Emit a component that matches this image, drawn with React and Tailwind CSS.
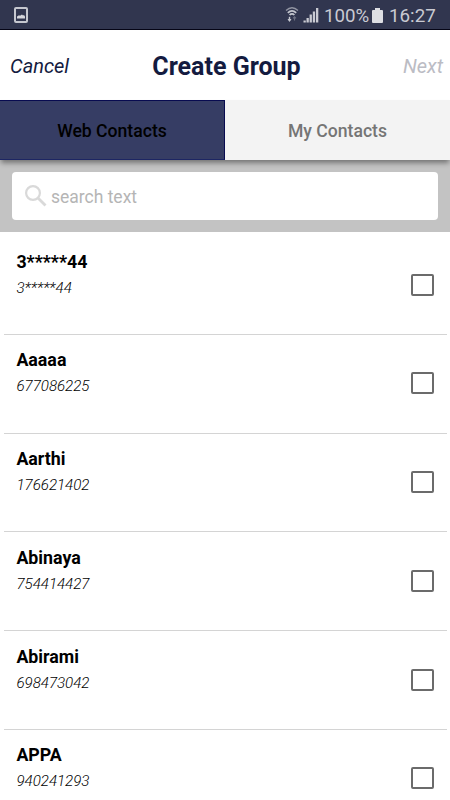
import React, { useState } from 'react';

const contacts = [
  { name: '3*****44', phone: '3*****44' },
  { name: 'Aaaaa', phone: '677086225' },
  { name: 'Aarthi', phone: '176621402' },
  { name: 'Abinaya', phone: '754414427' },
  { name: 'Abirami', phone: '698473042' },
  { name: 'APPA', phone: '940241293' },
];

// Android status bar
const StatusBar = () => (
  <div className="flex h-[30px] shrink-0 items-center border-b border-[#050516] bg-[#31364f] pl-[14px] pr-[14px] text-[#c9cad2]">
    <svg className="mt-px h-[16px] w-[14px]" viewBox="0 0 14 16" fill="none">
      <rect x="1" y="1" width="12" height="14" rx="1" stroke="#c5c7cf" strokeWidth="2" />
      <path d="M3 11.5V9.5L5 8.3L6 8.8L8 7.5L9 8.5L10 8L11 9.5V11.5Z" fill="#d5d6dc" />
    </svg>
    <svg className="ml-auto h-[17px] w-[14px]" viewBox="0 0 14 17" fill="none" stroke="#c5c7cf">
      <path d="M1 4.5Q7 -1 13 4.5" strokeWidth="1.3" opacity="0.65" />
      <path d="M2.8 6.8Q7 2.8 11.2 6.8" strokeWidth="1.6" />
      <path d="M4.6 9Q7 6.6 9.4 9" strokeWidth="1.7" />
      <path d="M4.5 10.8V15" strokeWidth="1.4" />
      <path d="M2.5 13H6.5L4.5 16Z" fill="#c5c7cf" stroke="none" />
      <path d="M9.5 14.5V11M8 12.3L9.5 10.8L11 12.3" strokeWidth="1.1" opacity="0.4" />
    </svg>
    <svg className="ml-[4px] h-[16px] w-[16px]" viewBox="0 0 16 16" fill="#c9cad2">
      <rect x="0.5" y="13.5" width="2.3" height="2" />
      <rect x="3.5" y="11" width="2.3" height="4.5" />
      <rect x="6.6" y="7.5" width="2.3" height="8" />
      <rect x="9.8" y="4.5" width="2.3" height="11" />
      <rect x="13" y="1" width="2.3" height="14.5" />
    </svg>
    <span className="ml-[5px] w-[46px] whitespace-nowrap pt-[2px] text-[18.7px] leading-[28px]">100%</span>
    <svg className="ml-[2px] mt-px h-[17px] w-[11px]" viewBox="0 0 11 17" fill="#dddee3">
      <path d="M3 1H8V3H10Q11 3 11 4V15Q11 16 10 16H1Q0 16 0 15V4Q0 3 1 3H3Z" />
    </svg>
    <span className="ml-[6px] w-[47px] whitespace-nowrap pt-[2px] text-[18.8px] leading-[28px]">16:27</span>
  </div>
);

const ContactRow = ({ contact, checked, onToggle }) => (
  <li className="ml-1 mr-[3px] flex h-[98.75px] shrink-0 justify-between border-b border-[#d4d4d4] pl-[12.4px] pr-[13px]">
    <div className="pt-[12.6px]">
      <p className="text-[17.8px] font-bold leading-[26px] text-black">{contact.name}</p>
      <p className="text-[15.1px] font-light italic leading-[26px] text-black">{contact.phone}</p>
    </div>
    <button
      type="button"
      role="checkbox"
      aria-checked={checked}
      aria-label={contact.name}
      onClick={onToggle}
      className={`mt-[37.5px] h-[22px] w-[23px] rounded-[2px] border-2 border-[#6b6b6b] ${checked ? 'bg-[#363d64]' : 'bg-white'}`}
    />
  </li>
);

const App = () => {
  const [activeTab, setActiveTab] = useState('web');
  const [search, setSearch] = useState('');
  const [selected, setSelected] = useState([]);

  const toggle = (name) => {
    setSelected((prev) => (prev.includes(name) ? prev.filter((n) => n !== name) : [...prev, name]));
  };

  const tabClass = (tab) =>
    activeTab === tab
      ? 'border border-l-0 border-[#080b50] border-b-[#1d2663] bg-[#363d64] pt-[2px] text-black'
      : 'bg-[#f3f3f3] pt-[2px] text-[#757575]';

  const visible = contacts.filter((c) => c.name.toLowerCase().includes(search.toLowerCase()));

  return (
    <div className="flex h-[800px] w-[450px] flex-col overflow-hidden bg-white font-['Roboto',sans-serif]">
      <StatusBar />

      {/* Header */}
      <header className="grid h-[70px] shrink-0 grid-cols-[1fr_auto_1fr] items-center pl-[10px] pr-[7px] pt-[2px] text-[#141b40]">
        <button type="button" className="text-left text-[20px] italic">Cancel</button>
        <h1 className="pt-[2px] text-[25px] font-bold">Create Group</h1>
        <button type="button" className="text-right text-[20px] italic text-[#bbbcc4]">Next</button>
      </header>

      {/* Tabs */}
      <div className="z-10 grid h-[60px] shrink-0 grid-cols-2 text-[17.6px] font-medium shadow-[0_4px_5px_-1px_rgba(0,0,0,0.4)]">
        <button type="button" className={tabClass('web')} onClick={() => setActiveTab('web')}>Web Contacts</button>
        <button type="button" className={tabClass('my')} onClick={() => setActiveTab('my')}>My Contacts</button>
      </div>

      {/* Search */}
      <div className="h-[72.4px] shrink-0 bg-[#c3c3c3] px-[12.4px] pt-[12.4px]">
        <label className="flex h-[47.6px] items-center rounded-[4px] bg-white pl-[12.5px]">
          <svg className="size-[22px] shrink-0" viewBox="0 0 22 22" fill="none" stroke="#d9d9d9">
            <circle cx="8" cy="8" r="6.9" strokeWidth="2.2" />
            <path d="M13 13L20.5 20.5" strokeWidth="2.8" />
          </svg>
          <input
            type="text"
            value={search}
            onChange={(e) => setSearch(e.target.value)}
            placeholder="search text"
            className="ml-[4px] w-full bg-transparent pt-px text-[17.5px] text-black outline-none placeholder:text-[#b5b5b5]"
          />
        </label>
      </div>

      {/* Contact list */}
      <ul className="flex flex-col pt-[3.7px]">
        {visible.map((contact) => (
          <ContactRow
            key={contact.name}
            contact={contact}
            checked={selected.includes(contact.name)}
            onToggle={() => toggle(contact.name)}
          />
        ))}
      </ul>
    </div>
  );
};

export default App;
